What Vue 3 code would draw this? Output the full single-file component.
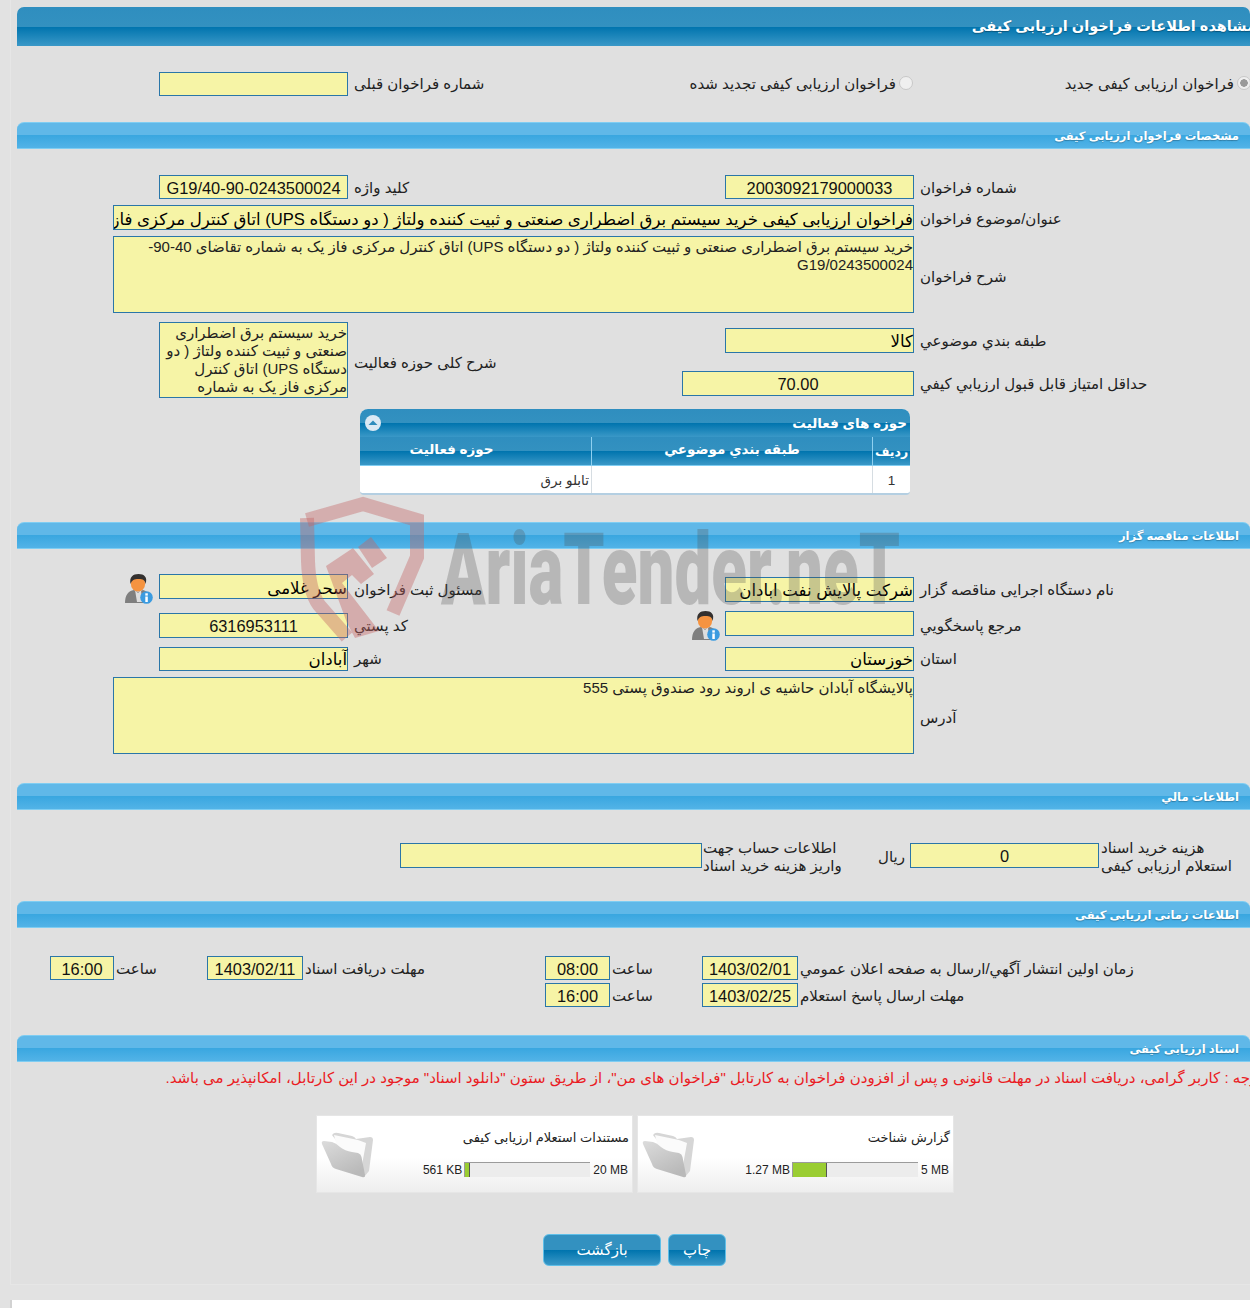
<script setup>
const cards = [
  { title: 'مستندات استعلام ارزیابی کیفی', used: '561 KB', max: '20 MB', pct: 4 },
  { title: 'گزارش شناخت', used: '1.27 MB', max: '5 MB', pct: 27 },
]
</script>

<template>
  <div class="page">
    <main class="panel">
      <header class="bar bar-main"><h1>مشاهده اطلاعات فراخوان ارزیابی کیفی</h1></header>

      <div class="kind-row">
        <div class="field w189"></div>
        <span class="lbl kind-prev">شماره فراخوان قبلی</span>
        <span class="lbl kind-b">فراخوان ارزیابی کیفی تجدید شده</span>
        <input class="radio" type="radio" name="kind" disabled />
        <span class="lbl kind-a">فراخوان ارزیابی کیفی جدید</span>
        <input class="radio radio-on" type="radio" name="kind" checked disabled />
      </div>

      <div class="bar bar-sec"><h2>مشخصات فراخوان ارزیابی کیفی</h2></div>
      <section class="grid grid-spec">
        <div class="field lf num h24">G19/40-90-0243500024</div>
        <span class="lbl ll">کلید واژه</span>
        <div class="field rf num h24">2003092179000033</div>
        <span class="lbl rl">شماره فراخوان</span>

        <div class="field wide strong clip self-end">فراخوان ارزیابی کیفی خرید سیستم برق اضطراری صنعتی و ثبیت کننده ولتاژ ( دو دستگاه UPS) اتاق کنترل مرکزی فاز یک به شماره تقاضای 40-90-G19/0243500024</div>
        <span class="lbl rl subject-l">عنوان/موضوع فراخوان</span>

        <div class="field wide area self-end">خرید سیستم برق اضطراری صنعتی و ثبیت کننده ولتاژ ( دو دستگاه UPS) اتاق کنترل مرکزی فاز یک به شماره تقاضای 40-90-G19/0243500024</div>
        <span class="lbl rl desc-l">شرح فراخوان</span>

        <div class="field lf area scope">خرید سیستم برق اضطراری صنعتی و ثبیت کننده ولتاژ ( دو دستگاه UPS) اتاق کنترل مرکزی فاز یک به شماره تقاضای</div>
        <span class="lbl ll scope-l">شرح کلی حوزه فعالیت</span>
        <div class="field rf strong cat">کالا</div>
        <span class="lbl rl cat-l">طبقه بندي موضوعي</span>
        <div class="field score num">70.00</div>
        <span class="lbl rl score-l">حداقل امتياز قابل قبول ارزيابي كيفي</span>
      </section>

      <section class="tbl">
        <div class="tbl-title">
          <svg class="collapse" viewBox="0 0 16 16"><circle cx="8" cy="8" r="8" fill="#dbe9f4"/><path d="M3.5 10 8 5.5 12.5 10Z" fill="#2f8dbd"/></svg>
          <span>حوزه های فعالیت</span>
        </div>
        <div class="tbl-row tbl-head">
          <div class="th-a">حوزه فعالیت</div>
          <div>طبقه بندي موضوعي</div>
          <div class="th-r">رديف</div>
        </div>
        <div class="tbl-row tbl-body">
          <div class="cell-text">تابلو برق</div>
          <div></div>
          <div class="cell-n">1</div>
        </div>
      </section>

      <div class="bar bar-sec org-bar"><h2>اطلاعات مناقصه گزار</h2></div>
      <section class="grid grid-org">
        <svg class="user user-l" viewBox="0 0 28 30">
          <path d="M0 29c0-8 3-12 9-13l4 2 5-2c4 1 7 4 7 13Z" fill="#7f7f7f"/>
          <path d="M10 16l3 3 3-3 1 12h-5Z" fill="#dedede"/>
          <ellipse cx="13" cy="9.5" rx="7.2" ry="8" fill="#f59340"/>
          <path d="M5.5 10C4 3 8 0 13.5 0S23 3 20.5 10C20 6 18 5 13.5 5S7 6 5.5 10Z" fill="#33302f"/>
          <circle cx="21.5" cy="23.5" r="6.3" fill="#3b9be0"/>
          <rect x="20.3" y="22.5" width="2.5" height="5.5" fill="#fff"/>
          <rect x="20.3" y="19.3" width="2.5" height="2.3" fill="#fff"/>
        </svg>
        <div class="field lf strong self-start low">سحر غلامی</div>
        <span class="lbl ll self-end">مسئول ثبت فراخوان</span>
        <div class="field rf strong self-end">شرکت پالایش نفت ابادان</div>
        <span class="lbl rl self-end">نام دستگاه اجرایی مناقصه گزار</span>

        <div class="field lf num self-end">6316953111</div>
        <span class="lbl ll self-end">کد پستي</span>
        <svg class="user user-r" viewBox="0 0 28 30">
          <path d="M0 29c0-8 3-12 9-13l4 2 5-2c4 1 7 4 7 13Z" fill="#7f7f7f"/>
          <path d="M10 16l3 3 3-3 1 12h-5Z" fill="#dedede"/>
          <ellipse cx="13" cy="9.5" rx="7.2" ry="8" fill="#f59340"/>
          <path d="M5.5 10C4 3 8 0 13.5 0S23 3 20.5 10C20 6 18 5 13.5 5S7 6 5.5 10Z" fill="#33302f"/>
          <circle cx="21.5" cy="23.5" r="6.3" fill="#3b9be0"/>
          <rect x="20.3" y="22.5" width="2.5" height="5.5" fill="#fff"/>
          <rect x="20.3" y="19.3" width="2.5" height="2.3" fill="#fff"/>
        </svg>
        <div class="field rf refer"></div>
        <span class="lbl rl self-end">مرجع پاسخگويي</span>

        <div class="field lf strong h24 self-end">آبادان</div>
        <span class="lbl ll self-end">شهر</span>
        <div class="field rf strong h24 self-end">خوزستان</div>
        <span class="lbl rl self-end">استان</span>

        <div class="field wide area self-end">پالایشگاه آبادان حاشیه ی اروند رود صندوق پستی 555</div>
        <span class="lbl rl addr-l">آدرس</span>
      </section>

      <div class="bar bar-sec fin-bar"><h2>اطلاعات مالي</h2></div>
      <section class="fin">
        <div class="field fin-acc"></div>
        <span class="lbl fin-l1">اطلاعات حساب جهت<br />واریز هزینه خرید اسناد</span>
        <span class="lbl fin-rial">ریال</span>
        <div class="field w189 num">0</div>
        <span class="lbl fin-l2">هزینه خرید اسناد<br />استعلام ارزیابی کیفی</span>
      </section>

      <div class="bar bar-sec time-bar"><h2>اطلاعات زمانی ارزیابی کیفی</h2></div>
      <section class="time">
        <div class="time-row">
          <div class="field t-time-first num">16:00</div>
          <span class="lbl t-l1">ساعت</span>
          <div class="field t-date num">1403/02/11</div>
          <span class="lbl t-l2">مهلت دریافت اسناد</span>
          <div class="field t-time num">08:00</div>
          <span class="lbl t-l3">ساعت</span>
          <div class="field t-date num">1403/02/01</div>
          <span class="lbl t-l4">زمان اولین انتشار آگهي/ارسال به صفحه اعلان عمومي</span>
        </div>
        <div class="time-row time-row2">
          <div class="field t-time num">16:00</div>
          <span class="lbl t-l3">ساعت</span>
          <div class="field t-date num">1403/02/25</div>
          <span class="lbl t-l4">مهلت ارسال پاسخ استعلام</span>
        </div>
      </section>

      <div class="bar bar-sec doc-bar"><h2>اسناد ارزیابی کیفی</h2></div>
      <p class="notice">توجه : کاربر گرامی، دریافت اسناد در مهلت قانونی و پس از افزودن فراخوان به کارتابل "فراخوان های من"، از طریق ستون "دانلود اسناد" موجود در این کارتابل، امکانپذیر می باشد.</p>

      <div class="cards">
        <article v-for="c in cards" :key="c.title" class="card">
          <svg class="folder" viewBox="0 0 54 50">
            <defs>
              <linearGradient id="flap" x1="0" y1="0" x2="0.6" y2="1">
                <stop offset="0" stop-color="#dcdcdc"/>
                <stop offset="1" stop-color="#b9b9b9"/>
              </linearGradient>
            </defs>
            <path d="M12 4Q14 1 18 2L32 5Q35 6 36 8L50 6Q53 6 53 9L49 40 44 46Z" fill="#d6d6d6"/>
            <path d="M14 4 38 9 46 12 42 34 18 20Z" fill="#fbfbfb"/>
            <path d="M2 13Q1 10 4 10L12 11Q16 12 20 16 25 20 32 21L38 22Q41 23 41.5 26L45 44Q45.5 47 42 46L16 38Q12 37 11 33Z" fill="url(#flap)"/>
          </svg>
          <div class="card-main">
            <div class="card-title">{{ c.title }}</div>
            <div class="meter-row">
              <span class="m-used">{{ c.used }}</span>
              <div class="meter"><div class="meter-fill" :style="{ width: c.pct + '%' }"></div></div>
              <span class="m-max">{{ c.max }}</span>
            </div>
          </div>
        </article>
      </div>

      <div class="actions">
        <button class="btn btn-back" type="button">بازگشت</button>
        <button class="btn btn-print" type="button">چاپ</button>
      </div>
    </main>

    <div class="foot"></div>

    <div class="mark" aria-hidden="true">
      <svg class="shield" viewBox="0 0 140 150">
        <path d="M12 25 68 9 122 25 122 62 98 118" fill="none" stroke="#c46464" stroke-opacity=".4" stroke-width="14"/>
        <path d="M12 23 13 66Q14 96 24 110L52 142" fill="none" stroke="#c46464" stroke-opacity=".4" stroke-width="14"/>
        <path d="M76 42 92 63 77 73 63 52Z M31 71 58 53 79 79 66 89 57 80 47 88 84 136 60 143 52 128Z" fill="#c46464" fill-opacity=".42"/>
      </svg>
      <span class="mark-text">AriaTender.neT</span>
    </div>
  </div>
</template>

<style scoped>
.page {
  position: relative;
  width: 1250px;
  height: 1308px;
  overflow: hidden;
  font-family: "Liberation Sans", "DejaVu Sans", sans-serif;
  color: #222;
}
.panel {
  box-sizing: border-box;
  height: 1285px;
  margin-left: 10px;
  padding: 7px 0 0 7px;
  background: #e0e0e0;
  border-left: 1px solid #e6e6e6;
  border-bottom: 1px solid #e6e6e6;
}
.foot {
  height: 8px;
  margin: 15px 0 0 10px;
  background: #fff;
  border-left: 2px solid #d2d2d2;
}
.bar {
  display: flex;
  justify-content: flex-end;
  align-items: center;
  margin-left: -1px;
  border-radius: 7px 7px 0 0;
  overflow: hidden;
}
.bar h1,
.bar h2 {
  margin: 0;
  color: #fff;
  direction: rtl;
  white-space: nowrap;
  font-weight: 700;
}
.bar-main {
  height: 39px;
  padding-bottom: 2px;
  box-sizing: border-box;
  background: linear-gradient(#2f8ebf 0, #3391c0 50%, #0074ae 51%, #3a98c7 100%);
}
.bar-main h1 {
  font-size: 14.5px;
  margin-right: -6px;
  text-shadow: 0 1px 1px rgba(0, 0, 0, 0.3);
}
.bar-sec {
  height: 27px;
  padding: 1px 11px 0 0;
  box-sizing: border-box;
  border-top: 1px solid #7fcdf2;
  border-bottom: 1px solid #7fcdf2;
  background: linear-gradient(#60b8e8 0, #60b8e8 48%, #3aa7e0 50%, #52b3e7 100%);
}
.bar-sec h2 {
  font-size: 11.5px;
  text-shadow: 0 1px 1px rgba(0, 0, 0, 0.25);
}

.lbl {
  display: block;
  direction: rtl;
  text-align: left;
  font-size: 15px;
  line-height: 24px;
  padding-top: 2px;
  white-space: nowrap;
}
.field {
  box-sizing: border-box;
  height: 25px;
  border: 1px solid #2a76a8;
  background: #f6f4a6;
  direction: rtl;
  text-align: right;
  font-size: 15px;
  line-height: 23px;
  color: #111;
  min-width: 0;
}
.h24 { height: 24px; }
.w189 { width: 189px; }
.num {
  text-align: center;
  font-size: 16.4px;
  line-height: 24px;
  direction: ltr;
}
.strong {
  font-size: 16.6px;
  line-height: 25px;
  color: #000;
  white-space: nowrap;
}
.strong.h24 { line-height: 23px; }
.low { line-height: 27px; }
.clip { overflow: hidden; line-height: 27px; }
.area {
  height: 77px;
  font-size: 15px;
  line-height: 18px;
  color: #222;
  overflow: hidden;
  padding-top: 1px;
}

.kind-row {
  display: flex;
  align-items: flex-start;
  height: 76px;
  padding: 26px 0 0 141px;
  box-sizing: border-box;
}
.kind-row .field { flex: none; height: 24px; }
.kind-row .lbl { padding-top: 0; }
.kind-prev { width: 335px; margin-left: 6px; flex: none; }
.kind-b { width: 207px; flex: none; text-align: right; }
.kind-a { width: 168px; flex: none; margin-left: 153px; text-align: right; }
.radio {
  appearance: none;
  width: 14px;
  height: 14px;
  margin: 4px 0 0 3px;
  flex: none;
  border: 1px solid #c8c8c8;
  border-radius: 50%;
  background: #efefef;
}
.radio-on {
  background: radial-gradient(circle, #9a9a9a 0 3.5px, #efefef 4px);
}

.grid {
  display: grid;
  grid-template-columns: 95px 46px 189px 6px 328px 43px 189px 6px 330px;
  align-items: center;
}
.lf { grid-column: 3; }
.ll { grid-column: 5; }
.rf { grid-column: 7; }
.rl { grid-column: 9; }
.wide { grid-column: 2 / 8; }
.self-start { align-self: start; }
.self-end { align-self: end; }

.grid-spec {
  margin-top: 26px;
  grid-template-rows: 24px 31px 83px 47px 38px;
}
.subject-l { align-self: end; margin-bottom: -1px; }
.desc-l { margin-top: 9px; }
.scope {
  grid-row: 4 / span 2;
  height: 76px;
  margin-top: 9px;
  align-self: start;
}
.scope-l { grid-row: 4 / span 2; margin-top: 13px; }
.cat { grid-row: 4; align-self: start; margin-top: 15px; }
.cat-l { grid-row: 4; align-self: start; margin-top: 14px; }
.score { grid-row: 5; grid-column: 6 / 8; align-self: start; margin-top: 11px; }
.score-l { grid-row: 5; align-self: start; margin-top: 10px; }

.tbl {
  width: 550px;
  height: 86px;
  margin: 11px 0 0 342px;
  border-radius: 8px 8px 4px 4px;
  overflow: hidden;
  border-bottom: 2px solid #b4cfe2;
  box-sizing: border-box;
  background: #fff;
}
.tbl-title {
  display: flex;
  justify-content: space-between;
  align-items: center;
  height: 28px;
  padding: 0 3px 0 5px;
  box-sizing: border-box;
  color: #fff;
  font-size: 13.5px;
  font-weight: 700;
  background: linear-gradient(#2f8ebf 0, #3391c0 50%, #0074ae 51%, #3a98c7 100%);
}
.tbl-title span { direction: rtl; }
.collapse { width: 16px; height: 16px; }
.tbl-row {
  display: grid;
  grid-template-columns: 232px 281px 37px;
}
.tbl-head {
  height: 29px;
  box-sizing: border-box;
  color: #fff;
  font-size: 13.5px;
  font-weight: 700;
  background: linear-gradient(#2f8ebf 0, #3391c0 50%, #0074ae 51%, #3a98c7 100%);
  border-bottom: 1px solid #7fcdf2;
}
.tbl-head div {
  direction: rtl;
  text-align: center;
  line-height: 25px;
  border-right: 1px solid #8fd0f0;
  white-space: nowrap;
}
.tbl-head .th-a { padding-right: 48px; }
.tbl-head .th-r { border-right: 0; font-size: 12.5px; line-height: 30px; }
.tbl-body { height: 27px; color: #333; font-size: 13.5px; line-height: 30px; }
.tbl-body div { border-right: 1px solid #d6dde2; }
.tbl-body div:last-child { border-right: 0; }
.cell-text { direction: rtl; text-align: right; padding-right: 2px; }
.cell-n { text-align: center; }

.org-bar { margin-top: 27px; }
.grid-org {
  margin-top: 25px;
  grid-template-rows: 28px 36px 33px 83px;
}
.user { width: 28px; height: 30px; align-self: start; justify-self: end; }
.user-l { grid-column: 2; margin-right: 6px; }
.user-r { grid-column: 6; margin-right: 5px; margin-top: 9px; }
.refer { align-self: start; margin-top: 9px; }
.addr-l { margin-top: 9px; }

.fin-bar { margin-top: 29px; }
.fin {
  display: flex;
  align-items: center;
  height: 36px;
  margin-top: 27px;
  padding-left: 382px;
}
.fin .lbl { line-height: 18px; padding-top: 4px; }
.fin-acc { width: 302px; flex: none; }
.fin-l1 { width: 178px; margin-left: 1px; flex: none; }
.fin-rial { width: 24px; margin-right: 5px; flex: none; text-align: center; }
.fin .w189 { flex: none; line-height: 25px; }
.fin-l2 { margin-left: 2px; }

.time-bar { margin-top: 28px; }
.time { margin-top: 28px; }
.time-row { display: flex; align-items: center; height: 24px; padding-left: 32px; }
.time-row2 { margin-top: 3px; padding-left: 527px; }
.time .field { flex: none; height: 24px; line-height: 24px; }
.t-time-first { width: 64px; }
.t-time { width: 65px; }
.t-date { width: 96px; }
.t-l1 { width: 91px; margin-left: 2px; flex: none; }
.t-l2 { width: 240px; margin-left: 2px; flex: none; }
.t-l3 { width: 90px; margin-left: 2px; flex: none; }
.t-l4 { margin-left: 2px; }

.doc-bar { margin-top: 28px; }
.notice {
  width: 1100px;
  height: 20px;
  margin: 6px 0 0 144px;
  direction: rtl;
  text-align: right;
  white-space: nowrap;
  font-size: 15px;
  line-height: 20px;
  color: #ea1c24;
}
.cards {
  display: flex;
  gap: 4px;
  margin-top: 27px;
  padding-left: 298px;
}
.card {
  box-sizing: border-box;
  display: flex;
  width: 317px;
  height: 78px;
  padding: 0 4px 0 3px;
  background: linear-gradient(#fff 0, #fff 55%, #eee 100%);
  border: 1px solid #e6e6e6;
}
.folder { flex: none; width: 54px; height: 50px; margin-top: 15px; }
.card-main { flex: 1; min-width: 0; }
.card-title {
  direction: rtl;
  text-align: right;
  margin: 14px -1px 0 0;
  font-size: 13px;
  line-height: 16px;
  white-space: nowrap;
  color: #222;
}
.meter-row {
  display: flex;
  justify-content: flex-end;
  align-items: center;
  margin-top: 16px;
  font-size: 12px;
  line-height: 14px;
  color: #222;
}
.m-used { margin-right: 2px; white-space: nowrap; }
.m-max { margin-left: 3px; white-space: nowrap; }
.meter {
  box-sizing: border-box;
  width: 126px;
  height: 15px;
  background: #ececec;
  border-top: 1px solid #9b9b9b;
  border-left: 1px solid #9b9b9b;
}
.meter-fill {
  box-sizing: border-box;
  height: 100%;
  background: #9acd32;
  border-right: 1px solid #555;
}
.actions {
  display: flex;
  gap: 7px;
  margin-top: 41px;
  padding-left: 525px;
}
.btn {
  height: 32px;
  padding: 0;
  border: 1px solid #5fbfe8;
  border-radius: 6px;
  color: #fff;
  direction: rtl;
  font-family: inherit;
  font-size: 15px;
  background: linear-gradient(#3391c0 0, #3391c0 50%, #0074ae 51%, #3a98c7 100%);
}
.btn-back { width: 118px; }
.btn-print { width: 58px; }

.mark {
  position: absolute;
  left: 295px;
  top: 495px;
  width: 620px;
  height: 150px;
  pointer-events: none;
}
.shield {
  position: absolute;
  left: 0;
  top: 0;
  width: 140px;
  height: 150px;
}
.mark-text {
  position: absolute;
  left: 146px;
  top: 25px;
  font-family: Roboto, "Liberation Sans", sans-serif;
  font-size: 100px;
  line-height: 100px;
  font-weight: 900;
  color: rgba(80, 80, 80, 0.28);
  white-space: nowrap;
  transform: scaleX(0.655);
  transform-origin: left top;
}
</style>

<style>
html, body { margin: 0; background: #e2e2e2; }
</style>
